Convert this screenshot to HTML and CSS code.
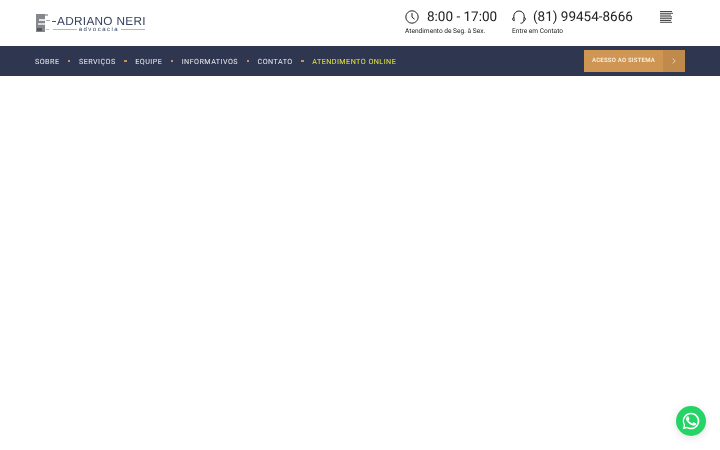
FILE: index.html
```html
<!DOCTYPE html>
<html lang="pt-BR">
  <head>
    <meta charset="UTF-8" />
    <meta name="viewport" content="width=device-width, initial-scale=1.0" />
    <title>Adriano Neri Advocacia</title>
    <link rel="stylesheet" href="styles.css">
  </head>

  <body>
    <!-- topo -->
    <header class="top">
      <a class="logo" href="#">
        <svg class="logo-mark" width="15" height="18" viewBox="0 0 15 18">
          <rect x="0" y="0" width="9" height="18" fill="#85878d"/>
          <rect x="9" y="0" width="3" height="2" fill="#b4b6ba"/>
          <rect x="3" y="5" width="6" height="2" fill="#e4e5e7"/>
          <rect x="2" y="9" width="7" height="2" fill="#d5d6d9"/>
          <rect x="1" y="14" width="5" height="3" fill="#55585f"/>
          <rect x="10" y="6" width="4" height="1" fill="#a9abb0"/>
          <rect x="10" y="15" width="3" height="1" fill="#c0c1c5"/>
        </svg>
        <span class="logo-text">
          <span class="logo-name"><i class="dash"></i>ADRIANO NERI</span>
          <span class="logo-sub"><i class="rule"></i>advocacia<i class="rule"></i></span>
        </span>
      </a>

      <div class="infos">
        <div class="info hours">
          <div class="info-main">
            <svg width="14" height="14" viewBox="0 0 14 14" fill="none" stroke="#222" stroke-width="1">
              <circle cx="7" cy="7" r="6.2"/>
              <path d="M7 3v4.2l2.6 2"/>
            </svg>
            <span>8:00 - 17:00</span>
          </div>
          <small>Atendimento de Seg. à Sex.</small>
        </div>
        <div class="info phone">
          <div class="info-main">
            <svg width="14" height="14" viewBox="0 0 14 14" fill="none" stroke="#222" stroke-width="1">
              <path d="M1.8 8V6.200a5.200 5.200 0 0 1 10.400 0V8"/>
              <path d="M1.800 7.500C.8 7.500.6 8.300.6 9s.3 1.700 1.700 1.700zM12.200 7.500c1 0 1.200.8 1.200 1.500s-.3 1.700-1.700 1.700z"/>
              <path d="M11.800 10.800c0 1.500-1.300 2.400-3.300 2.400"/>
            </svg>
            <span>(81) 99454-8666</span>
          </div>
          <small>Entre em Contato</small>
        </div>
        <svg class="lines" width="13" height="13" viewBox="0 0 13 13" stroke="#333" stroke-width=".9">
          <path d="M0 .5h12M0 2.300h13M0 4.100h11M0 5.900h12M0 7.700h12M0 9.500h11M0 11.300h12"/>
        </svg>
      </div>
    </header>

    <!-- menu -->
    <nav class="menu">
      <ul class="menu-list">
        <li>Sobre</li>
        <li>Serviços</li>
        <li>Equipe</li>
        <li>Informativos</li>
        <li>Contato</li>
        <li class="online">Atendimento Online</li>
      </ul>
      <a class="access" href="#">
        <span class="access-label">Acesso ao Sistema</span>
        <span class="access-arrow">
          <svg width="4" height="6" viewBox="0 0 4 6" fill="none" stroke="#f3e2cc" stroke-width=".8"><path d="M.7.5 3.200 3 .7 5.500"/></svg>
        </span>
      </a>
    </nav>

    <main class="content"></main>

    <!-- botao whatsapp -->
    <a class="whats" href="#">
      <svg width="20" height="20" viewBox="0 0 24 24" fill="#fff">
        <path d="M17.500 14.400c-.3-.15-1.750-.86-2-.96-.27-.1-.47-.15-.67.15-.2.3-.77.96-.94 1.160-.17.2-.35.22-.65.07-.3-.15-1.260-.46-2.400-1.480-.89-.79-1.490-1.770-1.660-2.070-.17-.3-.02-.46.13-.61.13-.13.3-.35.45-.52.15-.17.2-.3.3-.5.1-.2.05-.37-.02-.52-.08-.15-.67-1.620-.92-2.220-.24-.58-.49-.5-.67-.51h-.57c-.2 0-.52.07-.8.37-.27.3-1.040 1.020-1.040 2.480 0 1.460 1.070 2.880 1.210 3.070.15.2 2.100 3.200 5.080 4.490.71.31 1.260.49 1.700.63.71.23 1.360.2 1.870.12.57-.09 1.750-.72 2-1.410.25-.7.25-1.290.17-1.410-.07-.13-.27-.2-.57-.35z"/>
        <path d="M12 2a10 10 0 0 0-8.600 15L2 22l5.100-1.300A10 10 0 1 0 12 2zm0 18.200c-1.600 0-3.100-.43-4.400-1.200l-.32-.19-3.030.8.81-2.960-.2-.3A8.200 8.200 0 1 1 12 20.200z"/>
      </svg>
    </a>
  </body>
</html>
```

FILE: styles.css
```css
html, body, ul{
  margin: 0;
  padding: 0;
}

ul{
  list-style: none;
}

a{
  text-decoration: none;
  color: inherit;
}

body{
  height: 100vh;
  overflow: hidden;
  background-color: #fff;
  font-family: Roboto, "Liberation Sans", sans-serif;
  color: #222;
  text-rendering: geometricPrecision;
}

/* soft grey text, no colour fringes */
.logo, .infos, .menu-list, .access{
  filter: blur(.25px);
}

/* topo */
.top{
  height: 46px;
  display: flex;
  justify-content: space-between;
  padding: 0 47px 0 36px;
}

.logo{
  display: flex;
  align-items: center;
  gap: 1px;
  padding-bottom: 1px;
}

.logo-text{
  display: flex;
  flex-direction: column;
  align-items: center;
  padding-top: 3px;
}

.logo-name{
  display: flex;
  align-items: center;
  font: 11.8px/11px "Liberation Sans", sans-serif;
  letter-spacing: .3px;
  color: #36415f;
}

.dash{
  width: 4px;
  height: 1px;
  margin-right: 1px;
  background-color: #555;
}

.logo-sub{
  display: flex;
  align-items: center;
  gap: 2px;
  font: 6px/6px "Liberation Sans", sans-serif;
  letter-spacing: 1.5px;
  color: #36415f;
}

.rule{
  width: 24px;
  height: 1px;
  background-color: #b5b7bd;
}

.infos{
  display: flex;
  align-items: flex-start;
  padding-top: 8px;
}

.info-main{
  display: flex;
  align-items: center;
  gap: 8px;
  font-size: 13.5px;
  line-height: 18px;
}

.phone .info-main{
  gap: 7px;
}

.info small{
  display: block;
  font-size: 6.6px;
  line-height: 10px;
  color: #222;
}

.hours{
  width: 107px;
}

.phone{
  width: 148px;
}

.lines{
  margin-top: 3px;
}

/* menu */
.menu{
  height: 30px;
  display: flex;
  justify-content: space-between;
  align-items: center;
  padding: 0 35px;
  background-color: #2f3750;
}

.menu-list{
  display: flex;
  font-size: 7.2px;
  letter-spacing: .45px;
  text-transform: uppercase;
  color: #eceef1;
}

.menu-list li{
  display: flex;
  align-items: center;
}

.menu-list li:not(:last-child)::after{
  content: '';
  width: 2.500px;
  height: 2.500px;
  margin: 0 8.500px;
  background-color: #c99257;
}

.menu-list .online{
  color: #e8eb3a;
}

.access{
  display: flex;
  width: 101px;
  height: 22px;
  background-color: #cf9552;
  color: #f7ecdc;
}

.access-label{
  flex: 1;
  padding-left: 8px;
  font-size: 6px;
  font-weight: 700;
  line-height: 22px;
  letter-spacing: .2px;
  text-transform: uppercase;
}

.access-arrow{
  width: 22px;
  display: flex;
  justify-content: center;
  align-items: center;
  background-color: #c08a4d;
}

/* botao */
.whats{
  position: fixed;
  right: 14px;
  bottom: 14px;
  width: 30px;
  height: 30px;
  display: flex;
  justify-content: center;
  align-items: center;
  border-radius: 50%;
  background-color: #25d366;
  box-shadow: 0 2px 8px rgba(0, 0, 0, .12);
}
```
